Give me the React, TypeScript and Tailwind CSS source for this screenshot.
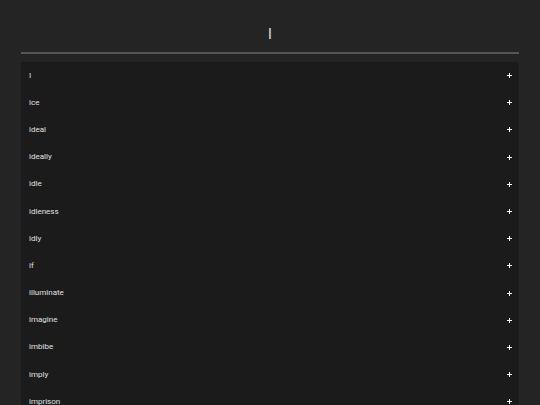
import React from "react";

const words = [
  "I",
  "ice",
  "ideal",
  "ideally",
  "idle",
  "idleness",
  "idly",
  "if",
  "illuminate",
  "imagine",
  "imbibe",
  "imply",
  "imprison",
  "improve",
];

const App = () => {
  return (
    <div className="h-[405px] overflow-hidden bg-[#242424] px-[21px] font-['Roboto',sans-serif] text-[#e0e0e0]">
      <h1 className="pt-[27px] pb-[11px] text-center text-[14px] leading-[14px] font-normal">
        I
      </h1>
      <div className="h-[2px] bg-[#555555]" />
      <div className="mt-[8px] bg-[#1b1b1b]">
        {words.map((word) => (
          <div
            key={word}
            className="flex h-[27.2px] items-center justify-between pl-[8px] pr-[7px]">
            <span className="text-[8px] leading-none">{word}</span>
            <svg width="5" height="5" viewBox="0 0 5 5" className="text-white">
              <path d="M2 0h1v2h2v1H3v2H2V3H0V2h2z" fill="currentColor" />
            </svg>
          </div>
        ))}
      </div>
    </div>
  );
};

export default App;
